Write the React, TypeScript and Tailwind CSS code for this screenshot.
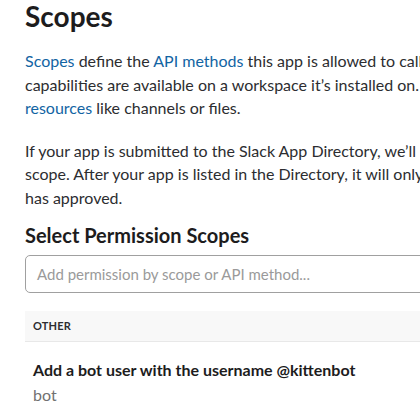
export default function App() {
  return (
    <div className="w-[420px] h-[414px] overflow-hidden bg-white font-['Lato',sans-serif]">
      <div className="w-[680px] pl-[25px] pt-0">
        <h1 className="text-[28px] leading-[34px] font-bold text-[#1d1c1d] -mt-[1px]">Scopes</h1>

        <p className="mt-[16px] text-[16px] leading-[23.5px] text-[#2c2d30] whitespace-nowrap">
          <a className="text-[#1264a3]">Scopes</a> define the <a className="text-[#1264a3]">API methods</a> this app is allowed to call, and thus which information and
          <br />
          capabilities are available on a workspace it’s installed on. Many scopes are restricted to specific
          <br />
          <a className="text-[#1264a3]">resources</a> like channels or files.
        </p>

        <p className="mt-[19px] text-[16px] leading-[23.5px] text-[#2c2d30] whitespace-nowrap">
          If your app is submitted to the Slack App Directory, we’ll need to review the reason for requesting each
          <br />
          scope. After your app is listed in the Directory, it will only be able to use permission scopes Slack
          <br />
          has approved.
        </p>

        <h2 className="mt-[12px] text-[20px] leading-[28px] font-bold text-[#1d1c1d]">Select Permission Scopes</h2>

        <div className="mt-[6px] h-[38px] rounded-[5px] border border-[#a0a0a0] flex items-center px-[11px]">
          <span className="text-[15px] text-[#9a9a9a]">Add permission by scope or API method...</span>
        </div>

        <div className="mt-[18px] h-[31px] bg-[#f8f8f8] border-b border-[#e8e8e8] flex items-center px-[8px]">
          <span className="text-[11px] font-bold tracking-[0.2px] text-[#2c2d30]">OTHER</span>
        </div>

        <div className="px-[8px] pt-[16px]">
          <div className="text-[16px] leading-[24px] font-bold text-[#1d1c1d]">Add a bot user with the username @kittenbot</div>
          <div className="text-[16px] leading-[26px] text-[#717171]">bot</div>
        </div>
      </div>
    </div>
  )
}
